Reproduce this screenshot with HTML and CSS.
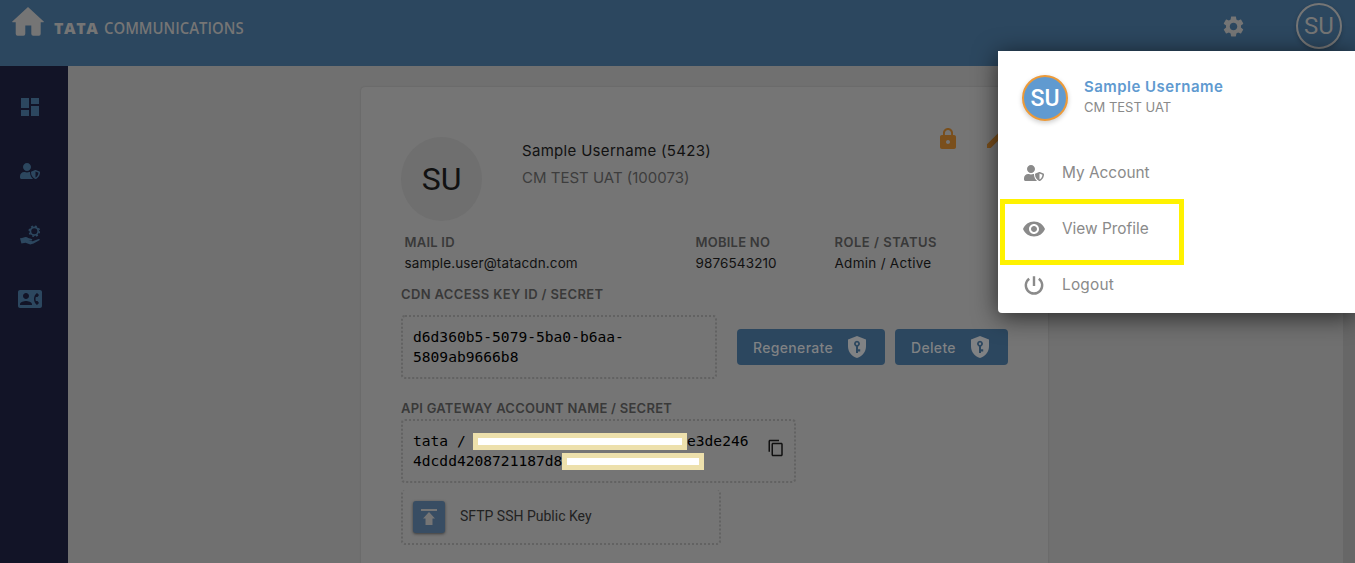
FILE: index.html
```html
<!DOCTYPE html>
<html lang="en">
<head>
<meta charset="utf-8">
<title>Tata Communications - Profile</title>
<link rel="stylesheet" href="styles.css">
</head>
<body>
<svg class="defs" width="0" height="0">
  <symbol id="user-shield" viewBox="0 0 640 512"><path d="M622.3 271.1l-115.2-45c-4.1-1.6-12.6-3.7-22.2 0l-115.2 45c-10.7 4.2-17.7 14-17.7 24.9 0 111.6 68.7 188.8 132.9 213.9 9.6 3.7 18 1.6 22.2 0C558.4 489.9 640 420.5 640 296c0-10.9-7-20.7-17.7-24.9zM496 462.4V273.3l95.5 37.3c-5.6 87.1-60.9 135.4-95.5 151.8zM224 256c70.7 0 128-57.3 128-128S294.7 0 224 0 96 57.3 96 128s57.3 128 128 128zm96 40c0-2.5.8-4.8 1.1-7.2-2.5-.1-4.9-.8-7.5-.8h-16.7c-22.2 10.2-46.9 16-72.9 16s-50.6-5.8-72.9-16h-16.7C60.2 288 0 348.2 0 422.4V464c0 26.5 21.5 48 48 48h352c6.8 0 13.3-1.5 19.2-4-54-42.9-99.2-116.7-99.2-212z"/></symbol>
  <symbol id="shield-key" viewBox="0 0 18 22"><path fill-rule="evenodd" d="M9 0L18 3.5V10.5C18 15.5 14.5 20.3 9 22C3.5 20.3 0 15.5 0 10.5V3.5ZM9 4.7A3.1 3.1 0 0 0 8 10.7V17H10V15.5H12.2V13.3H10V10.7A3.1 3.1 0 0 0 9 4.7ZM9 6.6A1.2 1.2 0 1 1 9 9A1.2 1.2 0 0 1 9 6.6Z"/></symbol>
</svg>

<header class="topbar">
  <svg class="home" viewBox="0 0 32 29"><path d="M16 0L32 14.7Q31.6 15.3 30.8 15.3H28.7V26.8Q28.7 28.7 27 28.7H21.2Q19.3 28.7 19.3 26.8V18.5H13.3V26.8Q13.3 28.7 11.5 28.7H5.6Q3.7 28.7 3.7 26.8V15.3H1.2Q.4 15.3 0 14.7Z"/></svg>
  <div class="brand"><span class="brand-tata">TATA</span><span class="brand-comm">COMMUNICATIONS</span></div>
  <svg class="gear" viewBox="0 0 24 24"><path d="M19.14 12.94c.04-.3.06-.61.06-.94 0-.32-.02-.64-.07-.94l2.03-1.58c.18-.14.23-.41.12-.61l-1.92-3.32c-.12-.22-.37-.29-.59-.22l-2.39.96c-.5-.38-1.03-.7-1.62-.94L14.4 2.81c-.04-.24-.24-.41-.48-.41h-3.84c-.24 0-.43.17-.47.41L9.25 5.35c-.59.24-1.13.57-1.62.94l-2.39-.96c-.22-.08-.47 0-.59.22L2.74 8.87c-.12.21-.08.47.12.61l2.03 1.58c-.05.3-.09.63-.09.94s.02.64.07.94l-2.03 1.58c-.18.14-.23.41-.12.61l1.92 3.32c.12.22.37.29.59.22l2.39-.96c.5.38 1.03.7 1.62.94l.36 2.54c.05.24.24.41.48.41h3.84c.24 0 .44-.17.47-.41l.36-2.54c.59-.24 1.13-.56 1.62-.94l2.39.96c.22.08.47 0 .59-.22l1.92-3.32c.12-.22.07-.47-.12-.61l-2.01-1.58zM12 15.6c-1.98 0-3.6-1.62-3.6-3.6s1.62-3.6 3.6-3.6 3.6 1.62 3.6 3.6-1.62 3.6-3.6 3.6z"/></svg>
  <div class="avatar avatar-top">SU</div>
</header>

<div class="shell">
  <nav class="sidebar">
    <svg width="24" height="24" viewBox="0 0 24 24"><path d="M3 13h8V3H3v10zm0 8h8v-6H3v6zm10 0h8V11h-8v10zm0-18v6h8V3h-8z"/></svg>
    <svg width="20" height="16"><use href="#user-shield"/></svg>
    <svg width="20" height="20" viewBox="0 0 20 20"><circle cx="14.3" cy="6.2" r="3.9" fill="none" stroke="#2c475f" stroke-width="1.7"/><circle cx="14.3" cy="6.2" r="5.1" fill="none" stroke="#2c475f" stroke-width="1.5" stroke-dasharray="2 2.005"/><path d="M0 13.2L2 13.1L5.4 12.1Q7 12 8.2 13L11.8 14Q12.8 14.8 11.8 15.5L8.5 15.4L12.7 16.2L18.6 14Q20 13.8 19.8 15L13.6 18.6L10.3 19.4L5.5 17.7L1.4 18.6Z"/></svg>
    <svg width="24" height="24" viewBox="0 0 24 24"><path d="M22 3H2C.9 3 0 3.9 0 5v14c0 1.1.9 2 2 2h20c1.1 0 1.99-.9 1.99-2L24 5c0-1.1-.9-2-2-2zM8 6c1.66 0 3 1.34 3 3s-1.34 3-3 3-3-1.34-3-3 1.34-3 3-3zm6 12H2v-1c0-2 4-3.1 6-3.1s6 1.1 6 3.1v1zm3.85-4h1.64L21 16l-1.99 1.99c-1.31-.98-2.28-2.38-2.73-3.99-.18-.64-.28-1.31-.28-2s.1-1.36.28-2c.45-1.62 1.42-3.01 2.73-3.99L21 8l-1.51 2h-1.64c-.22.63-.35 1.3-.35 2s.13 1.37.35 2z"/></svg>
  </nav>

  <main class="content">
    <section class="card">
      <div class="profile">
        <div class="avatar-big">SU</div>
        <div class="who"><div class="name">Sample Username (5423)</div><div class="org">CM TEST UAT (100073)</div></div>
        <div class="tools">
          <svg viewBox="0 0 24 24"><path d="M18 8h-1V6c0-2.76-2.24-5-5-5S7 3.24 7 6v2H6c-1.1 0-2 .9-2 2v10c0 1.1.9 2 2 2h12c1.1 0 2-.9 2-2V10c0-1.1-.9-2-2-2zm-6 9c-1.1 0-2-.9-2-2s.9-2 2-2 2 .9 2 2-.9 2-2 2zm3.1-9H8.9V6c0-1.71 1.39-3.1 3.1-3.1 1.71 0 3.1 1.39 3.1 3.1v2z"/></svg>
          <svg viewBox="0 0 24 24"><path d="M3 17.25V21h3.75L17.81 9.94l-3.75-3.75L3 17.25zM20.71 7.04c.39-.39.39-1.02 0-1.41l-2.34-2.34c-.39-.39-1.02-.39-1.41 0l-1.83 1.83 3.75 3.75 1.83-1.83z"/></svg>
        </div>
      </div>
      <div class="facts">
        <div><div class="label l-mail">MAIL ID</div><div class="value v-mail">sample.user@tatacdn.com</div></div>
        <div><div class="label l-mobile">MOBILE NO</div><div class="value v-mobile">9876543210</div></div>
        <div><div class="label l-role">ROLE / STATUS</div><div class="value v-role">Admin / Active</div></div>
      </div>
      <div class="label cdn-label">CDN ACCESS KEY ID / SECRET</div>
      <div class="key-row">
        <div class="box key-box">d6d360b5-5079-5ba0-b6aa-<br>5809ab9666b8</div>
        <button class="btn regen"><span>Regenerate</span><svg><use href="#shield-key"/></svg></button>
        <button class="btn delete"><span>Delete</span><svg><use href="#shield-key"/></svg></button>
      </div>
      <div class="label api-label">API GATEWAY ACCOUNT NAME / SECRET</div>
      <div class="box api-box">
        <div class="secret">
          <div class="secret-line"><span class="lead">tata /</span><i class="mask mask-a"></i><span>e3de246</span></div>
          <div class="secret-line"><span>4dcdd4208721187d8</span><i class="mask mask-b"></i></div>
        </div>
        <svg class="copy" viewBox="0 0 24 24"><path d="M16 1H4c-1.1 0-2 .9-2 2v14h2V3h12V1zm3 4H8c-1.1 0-2 .9-2 2v14c0 1.1.9 2 2 2h11c1.1 0 2-.9 2-2V7c0-1.1-.9-2-2-2zm0 16H8V7h11v14z"/></svg>
      </div>
      <div class="box sftp-box">
        <div class="upload"><svg viewBox="0 0 16 16"><path d="M0 0H16V2H0ZM8 3L14 9.5H11.5V16H4.5V9.5H2Z"/></svg></div>
        <span>SFTP SSH Public Key</span>
      </div>
    </section>
    <div class="scrollbar"></div>
  </main>
</div>

<aside class="menu">
  <div class="menu-head">
    <div class="avatar avatar-menu">SU</div>
    <div><div class="menu-name">Sample Username</div><div class="menu-org">CM TEST UAT</div></div>
  </div>
  <div class="item"><svg width="20" height="16"><use href="#user-shield"/></svg><span class="t-account">My Account</span></div>
  <div class="item"><svg width="24" height="24" viewBox="0 0 24 24"><path d="M12 4.5C7 4.5 2.73 7.61 1 12c1.73 4.39 6 7.5 11 7.5s9.27-3.11 11-7.5c-1.73-4.39-6-7.5-11-7.5zM12 17c-2.76 0-5-2.24-5-5s2.24-5 5-5 5 2.24 5 5-2.24 5-5 5zm0-8c-1.66 0-3 1.34-3 3s1.34 3 3 3 3-1.34 3-3-1.34-3-3-3z"/></svg><span class="t-view">View Profile</span></div>
  <div class="item"><svg width="20" height="20" viewBox="0 0 20 20"><path d="M5.2 3.7A8.2 8.2 0 1 0 14.8 3.7M10 1.2V11" fill="none" stroke="#8a8a8a" stroke-width="2.4"/></svg><span class="t-logout">Logout</span></div>
  <div class="highlight"></div>
</aside>
</body>
</html>
```
FILE: styles.css
```css
* { box-sizing: border-box; }
body { margin: 0; width: 1355px; height: 563px; overflow: hidden; position: relative; background: #707070; font-family: Inter, "Liberation Sans", sans-serif; color: #111; }
svg { display: block; flex: none; }
.defs { position: absolute; }
.topbar { height: 66px; background: #2c475f; display: flex; align-items: flex-start; }
.home { width: 32px; height: 29px; margin: 7px 0 0 12px; fill: #757575; }
.brand { display: flex; margin: 17px 0 0 10px; line-height: 22px; color: #757575; white-space: nowrap; width: 210px; }
.brand-tata { width: 50px; flex: none; font: 800 16px/22px "Open Sans", sans-serif; letter-spacing: .6px; }
.brand-comm { flex: none; font: 600 16px/22px "Open Sans", sans-serif; transform: scaleX(.93); transform-origin: left; }
.gear { width: 25px; height: 25px; margin: 13.5px 50px 0 auto; fill: #757575; }
.avatar { width: 46px; height: 46px; border-radius: 50%; font: 24px/42px Roboto, sans-serif; text-align: center; }
.avatar-top { margin: 3px 13px 0 0; border: 2px solid #757575; color: #757575; box-shadow: 0 2px 4px rgba(0,0,0,.2); }
.shell { display: flex; height: 497px; }
.sidebar { width: 68px; background: #121427; display: flex; flex-direction: column; align-items: center; padding: 29px 8px 0 0; fill: #2c475f; }
.sidebar svg:nth-child(2) { margin-top: 44px; }
.sidebar svg:nth-child(3) { margin-top: 46px; }
.sidebar svg:nth-child(4) { margin-top: 42px; }
.content { flex: 1; display: flex; justify-content: space-between; padding-left: 293px; }
.card { width: 687px; height: 476px; margin-top: 21px; padding: 0 40px; background: #757575; border-radius: 4px 4px 0 0; box-shadow: 0 0 2px rgba(0,0,0,.16); flex: none; }
.scrollbar { width: 12px; background: #676767; }
.profile { display: flex; padding-top: 50px; height: 145px; }
.avatar-big { width: 81px; height: 84px; border-radius: 50%; background: #6f6f6f; font: 32px/84px Roboto, sans-serif; text-align: center; color: #111; }
.who { margin-left: 40px; width: 414px; line-height: 27px; font-size: 15px; white-space: nowrap; }
.name { letter-spacing: .31px; }
.org { color: #3d3d3d; }
.tools { display: flex; gap: 24px; margin-top: -10px; fill: #7a4f1c; }
.tools svg { width: 24px; height: 24px; }
.facts { display: grid; grid-template-columns: 291px 139px 170px; padding-left: 3.5px; line-height: 21px; white-space: nowrap; height: 52px; }
.label { font-size: 13px; font-weight: 600; color: #393939; white-space: nowrap; line-height: 21px; letter-spacing: .24px; }
.l-role { letter-spacing: .5px; }
.cdn-label { letter-spacing: .36px; }
.value { font-size: 13.5px; letter-spacing: .12px; }
.v-role { letter-spacing: .28px; }
.key-row { display: flex; align-items: center; margin-top: 10px; height: 64px; }
.box { border: 2px dotted #626262; border-radius: 4px; padding: 10px; font: 14.6px/20px "DejaVu Sans Mono", monospace; color: #000; }
.key-box { width: 316px; height: 64px; margin-right: 20px; }
.btn { height: 36px; border: 0; border-radius: 4px; background: #2c475f; color: #808284; fill: #808284; font: 500 14px Inter, sans-serif; letter-spacing: .33px; display: flex; align-items: center; justify-content: space-between; padding: 0 19px 0 16px; }
.btn svg { width: 18px; height: 22px; }
.regen { width: 148px; margin-right: 10px; }
.delete { width: 113px; }
.api-label { margin-top: 19px; }
.api-box { width: 395px; height: 64px; display: flex; align-items: center; justify-content: space-between; }
.secret-line { display: flex; align-items: center; height: 20px; }
.lead { width: 60px; }
.mask { height: 17px; border: 5px solid #ede0ac; background: #fff; }
.mask-a { width: 214px; }
.mask-b { width: 142px; }
.copy { width: 18px; height: 18px; margin: 0 -1px 7px 0; fill: #111; }
.sftp-box { width: 320px; height: 55px; margin-top: 7px; padding-top: 11px; border-top: 0; display: flex; align-items: flex-start; font: 14px/31px Roboto, sans-serif; color: #222; }
.upload { width: 32px; height: 32px; margin-right: 15px; border-radius: 3px; background: #384d63; box-shadow: 0 1px 3px rgba(0,0,0,.5); display: flex; align-items: center; justify-content: center; }
.upload svg { width: 16px; height: 16px; fill: #757575; }
.menu { position: absolute; left: 998px; top: 51px; width: 357px; height: 262px; background: #fff; border-radius: 0 0 0 4px; box-shadow: 0 4px 24px rgba(0,0,0,.65); }
.menu-head { display: flex; padding: 24px 0 0 24px; height: 94px; white-space: nowrap; }
.menu-head > div:last-child { margin-left: 16px; }
.avatar-menu { background: #609ad0; border: 2px solid #ed9a38; color: #fff; line-height: 43px; font-weight: 500; font-size: 23px; box-shadow: 0 2px 5px rgba(0,0,0,.2); }
.menu-name { color: #609ad0; font-weight: 600; font-size: 15px; line-height: 24px; letter-spacing: .47px; }
.menu-org { color: #8a8a8a; font-size: 13px; line-height: 16px; }
.item { height: 56px; display: grid; grid-template-columns: 24px auto; column-gap: 16px; align-items: center; justify-items: start; padding-left: 24px; color: #8a8a8a; font-size: 15.4px; fill: #8a8a8a; white-space: nowrap; }
.item svg { justify-self: center; }
.item span { padding-bottom: 2px; }
.item svg { margin: 0 0 1px -1px; }
.t-logout { letter-spacing: .2px; }
.highlight { position: absolute; left: 2px; top: 148px; width: 184px; height: 66px; border: 5px solid #fff200; }
```
